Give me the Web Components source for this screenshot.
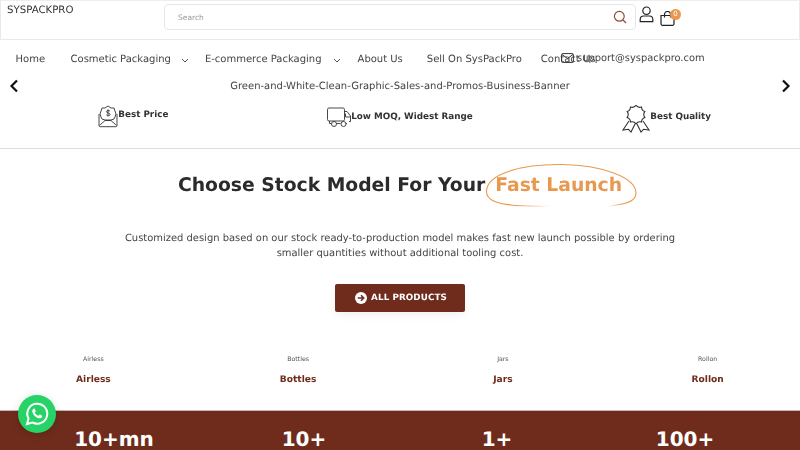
<!DOCTYPE html>
<html lang="en"><head><meta charset="utf-8"><title>SysPackPro</title>
<style>
html{margin:0;height:450px;overflow:hidden;background:#fff}
body{margin:0;height:462px;background:#fff;font-family:"DejaVu Sans",sans-serif;color:#333;position:relative;text-rendering:geometricPrecision;filter:blur(.3px)}
site-header,site-nav,banner-slider,feature-row,hero-section,category-row{will-change:transform}
</style></head><body>
<site-header></site-header>
<site-nav></site-nav>
<banner-slider>Green-and-White-Clean-Graphic-Sales-and-Promos-Business-Banner</banner-slider>
<feature-row></feature-row>
<hero-section></hero-section>
<category-row></category-row>
<stats-band></stats-band>
<whatsapp-fab></whatsapp-fab>
<script>
function def(name,html){customElements.define(name,class extends HTMLElement{constructor(){super();this.attachShadow({mode:'open'}).innerHTML=html}})}
def('site-header',`<style>
:host{display:flex;box-sizing:border-box;height:40px;border:1px solid #e9e9e9;border-top:1px solid #eee;padding:3px 0 0 6px}
.logo{font-size:10.200px;line-height:14px;width:157px;color:#333}
.search{box-sizing:border-box;width:472px;height:26px;border:1px solid #e6e6e6;border-radius:4px;display:flex;align-items:center;justify-content:space-between;padding:0 8px 0 13px;font-size:7.500px;color:#999}
.icons{display:flex;margin-left:3px;position:relative}
svg{display:block;fill:none}
.bag{position:relative;margin-left:6px;margin-top:7px}
.badge{position:absolute;left:10px;top:-2px;width:11px;height:11px;border-radius:50%;background:#e8994f;color:#fff;font-size:7px;line-height:11px;text-align:center}
</style>
<div class="logo">SYSPACKPRO</div>
<div class="search"><span>Search</span><svg width="14" height="14" viewBox="0 0 14 14" stroke="#8f4a34" stroke-width="1.2"><circle cx="6.3" cy="6.3" r="4.9"/><path d="M10 10l3 3"/></svg></div>
<div class="icons"><svg width="15" height="17" viewBox="0 0 15 17" stroke="#222" stroke-width="1.2" style="margin-top:2px"><circle cx="7.5" cy="4.7" r="3.7"/><path d="M1.2 15.6v-2.3c0-2 1.6-3.3 3.5-3.3h5.6c1.900 0 3.500 1.300 3.500 3.300v2.300z"/></svg>
<div class="bag"><svg width="15" height="15" viewBox="0 0 15 15" stroke="#222" stroke-width="1.200"><path d="M1 4.500h13v8.300a1.500 1.500 0 0 1-1.500 1.500h-10a1.500 1.500 0 0 1-1.500-1.500z"/><path d="M4.500 6.500V3.500a3 3 0 0 1 6 0v3"/></svg><span class="badge">0</span></div></div>`);
def('site-nav',`<style>
:host{display:flex;position:relative;height:38px;align-items:center;font-size:10px;color:#444;padding-left:15.500px;box-sizing:border-box}
span{white-space:nowrap;position:relative;top:.5px}
.caret{margin:2px 0 0 10px}
.mail{position:absolute;left:561px;top:10px;height:16px;display:flex;align-items:center;gap:3px;font-size:9.900px}
.mail span{top:0}
svg{display:block;fill:none}
</style>
<span>Home</span>
<span style="margin-left:25.500px">Cosmetic Packaging</span><svg class="caret" width="8" height="5" viewBox="0 0 8 5" stroke="#555"><path d="M1 1l3 3 3-3"/></svg>
<span style="margin-left:16px">E-commerce Packaging</span><svg class="caret" style="margin-left:11px" width="8" height="5" viewBox="0 0 8 5" stroke="#555"><path d="M1 1l3 3 3-3"/></svg>
<span style="margin-left:17px">About Us</span>
<span style="margin-left:24px">Sell On SysPackPro</span>
<span style="margin-left:19px">Contact Us</span>
<div class="mail"><svg width="13" height="10" viewBox="0 0 13 10" stroke="#333"><rect x=".6" y=".6" width="11.800" height="8.800" rx="1"/><path d="M1 1.500l5.500 4 5.500-4"/></svg><span>support@syspackpro.com</span></div>`);
def('banner-slider',`<style>
:host{display:flex;height:16px;align-items:center;justify-content:space-between;padding:0 9px;font-size:10px;color:#444}
svg{display:block;fill:none}
</style>
<svg width="10" height="14" viewBox="0 0 10 14" stroke="#111" stroke-width="2.200"><path d="M8 1.500L2.500 7 8 12.500"/></svg>
<span><slot></slot></span>
<svg width="10" height="14" viewBox="0 0 10 14" stroke="#111" stroke-width="2.200"><path d="M2 1.500L7.500 7 2 12.500"/></svg>`);
def('feature-row',`<style>
:host{display:grid;grid-template-columns:repeat(3,1fr);box-sizing:border-box;height:55px;padding-top:11px;border-bottom:1px solid #ddd;font-size:8.800px;font-weight:700;color:#333}
div{display:flex;justify-content:center;height:28px;align-items:flex-start}
span{white-space:nowrap}
svg{display:block;fill:none;flex:none}
.a span{margin-top:5px}
.b span,.c span{margin-top:7px}
</style>
<div class="a"><svg width="20" height="23" viewBox="0 0 20 23" stroke="#333" stroke-width=".9"><path d="M10 1l3 2h3l1 3 1 3-1 3-1 2-3 1H7l-3-1-1-2-1-3 1-3 1-3h3z"/><path d="M1 9v11.500a1.200 1.200 0 0 0 1.200 1.200h15.600a1.200 1.200 0 0 0 1.200-1.200V9M1.500 20.500L7 15.500h6l5.500 5"/><path d="M12 6.200c-.5-.8-3.500-1-3.500.6 0 1.700 3.600.8 3.600 2.600 0 1.500-3 1.500-3.700.5M10 4.300v7.200"/></svg><span>Best Price</span></div>
<div class="b"><svg width="25" height="21" viewBox="0 0 25 21" stroke="#333" stroke-width=".9" style="margin-top:2px;margin-right:-1px"><rect x=".5" y="1" width="17" height="13" rx="1.500"/><path d="M17.500 4.500h2.500l3.500 4.500v5.500h-1.500M18.500 6.500v3.500h5M2.500 14v2.500h2M9.500 16.500h4M19 16.500h1"/><circle cx="7" cy="17" r="2.500"/><circle cx="16.500" cy="17" r="2.500"/></svg><span>Low MOQ, Widest Range</span></div>
<div class="c"><svg width="28" height="28" viewBox="0 0 28 28" stroke="#333" stroke-width="1.100"><path d="M14 .4A5 5 0 0 0 19.500 2 5 5 0 0 0 22.800 6.600 5 5 0 0 0 22.800 12.400 5 5 0 0 0 19.500 17 5 5 0 0 0 14 18.800 5 5 0 0 0 8.500 17 5 5 0 0 0 5.200 12.400 5 5 0 0 0 5.200 6.600 5 5 0 0 0 8.500 2 5 5 0 0 0 14 .4z"/><path d="M7 16l-6 9 5.500-.7L9 27l4-8M21 16l6 9-5.500-.7L19 27l-4-8"/></svg><span>Best Quality</span></div>`);
def('hero-section',`<style>
:host{display:flex;flex-direction:column;align-items:center}
h2{margin:24px 0 0;font-size:18.750px;line-height:26px;font-weight:700;color:#2b2b2b;white-space:nowrap;display:flex}
.em{position:relative;color:#e8994f;margin-left:10px}
.em svg{position:absolute;left:-9px;top:-9px;fill:none;overflow:visible}
p{margin:32px 0 0;width:570px;text-align:center;font-size:9.950px;line-height:15px;color:#444}
a{margin-top:23px;box-sizing:border-box;width:130px;height:28px;background:#6f2c1c;border-radius:2px;color:#fff;display:flex;align-items:center;justify-content:center;gap:4px;padding-left:2px;font-size:8.750px;font-weight:700;letter-spacing:.1px;box-shadow:0 4px 10px rgba(0,0,0,.05)}
a svg{display:block}
</style>
<h2><span>Choose Stock Model For Your</span><span class="em">Fast Launch<svg width="150" height="43" viewBox="0 0 150 43" stroke="#e8994f" stroke-width="1.100"><defs><linearGradient id="l" gradientUnits="userSpaceOnUse" x1="30" y1="0" x2="64" y2="0"><stop offset="0" stop-color="#e8994f"/><stop offset="1" stop-color="#e8994f" stop-opacity="0"/></linearGradient><linearGradient id="r" gradientUnits="userSpaceOnUse" x1="136" y1="0" x2="122" y2="0"><stop offset="0" stop-color="#e8994f"/><stop offset="1" stop-color="#e8994f" stop-opacity="0"/></linearGradient></defs><path d="M30 41.500C10 40 0 36 .5 27 1 10 35 0 76 .5c39 .5 74 12.500 74 28.500 0 6-6 9.500-14 11"/><path stroke="url(#l)" d="M30 41.500c10 .7 20 .8 34 .8"/><path stroke="url(#r)" d="M136 40c-4 .9-9 1.600-14 2.200"/></svg></span></h2>
<p>Customized design based on our stock ready-to-production model makes fast new launch possible by ordering smaller quantities without additional tooling cost.</p>
<a><svg width="12" height="12" viewBox="0 0 11 11"><circle cx="5.500" cy="5.500" r="5.500" fill="#fff"/><path d="M2.500 5.500h5M5.500 3l2.500 2.500L5.500 8" fill="none" stroke="#6f2c1c" stroke-width="1.400"/></svg>ALL PRODUCTS</a>`);
def('category-row',`<style>
:host{display:grid;grid-template-columns:repeat(4,1fr);margin:0 -9.500px;padding-top:43px;height:55px;text-align:center}
small{display:block;font-size:6.250px;line-height:10px;color:#555}
b{display:block;margin-top:9px;font-size:9.100px;line-height:12px;color:#6f2c1c}
</style>
<div><small>Airless</small><b>Airless</b></div>
<div><small>Bottles</small><b>Bottles</b></div>
<div><small>Jars</small><b>Jars</b></div>
<div><small>Rollon</small><b>Rollon</b></div>`);
def('stats-band',`<style>
:host{display:grid;grid-template-columns:228px 152px 234px 142px;height:52px;background:#6f2c1c;border-top:1px solid #c9b5ae;box-sizing:border-box;color:#fff;font-size:20px;font-weight:700;text-align:center;padding-top:15px;line-height:26px}
</style>
<div>10+mn</div><div>10+</div><div>1+</div><div>100+</div>`);
def('whatsapp-fab',`<style>
:host{position:absolute;left:17.500px;top:395px;width:38px;height:38px;border-radius:50%;background:#25d366;display:flex;align-items:center;justify-content:center;box-shadow:0 2px 10px rgba(0,0,0,.15)}
svg{display:block}
</style>
<svg width="24" height="24" viewBox="0 0 24 24"><path fill="none" stroke="#fff" stroke-width="2" d="M2 22l1.500-5.500A10 10 0 1 1 7.500 20.500z"/><path fill="#fff" d="M8.500 6.800c.5-.4 1.100-.4 1.400.2l.8 1.800c.1.300 0 .6-.2.800l-.7.800c.7 1.500 1.800 2.600 3.500 3.400l.9-1c.2-.2.500-.3.800-.2l1.800.9c.4.200.5.600.4 1-.3 1.300-1.600 2-2.900 1.800-3.500-.6-6.300-3.300-7-6.800-.2-1 .3-2 1.200-2.700z"/></svg>`);
</script>
</body></html>
